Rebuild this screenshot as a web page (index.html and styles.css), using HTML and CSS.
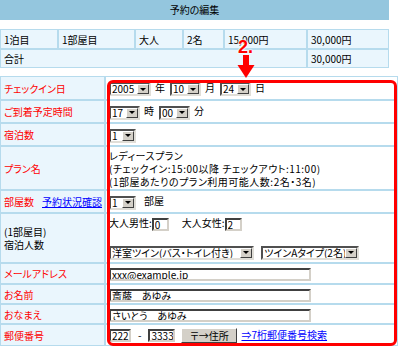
FILE: index.html
```html
<!DOCTYPE html>
<html lang="ja">
<head>
    <meta charset="UTF-8">
    <title>予約の編集</title>
    <link rel="stylesheet" href="styles.css">
</head>
<body>
<div class="page">
    <div class="title">予約の編集</div>

    <table class="summary">
        <colgroup>
            <col class="s1"><col class="s2"><col class="s3"><col class="s4"><col class="s5"><col class="s6">
        </colgroup>
        <tr>
            <td>1泊目</td><td>1部屋目</td><td>大人</td><td>2名</td><td>15,000円</td><td>30,000円</td>
        </tr>
        <tr>
            <td colspan="5">合計</td><td>30,000円</td>
        </tr>
    </table>

    <table class="form">
        <colgroup><col class="lab"><col></colgroup>
        <tr class="r1">
            <th>チェックイン日</th>
            <td>
                <span class="sel w-year"><select><option>2005</option></select><span class="drop"></span></span><span class="unit">年</span><span class="sel w-2"><select><option>10</option></select><span class="drop"></span></span><span class="unit">月</span><span class="sel w-2"><select><option>24</option></select><span class="drop"></span></span><span class="unit">日</span>
            </td>
        </tr>
        <tr class="r2">
            <th>ご到着予定時間</th>
            <td>
                <span class="sel w-2"><select><option>17</option></select><span class="drop"></span></span><span class="unit">時</span><span class="sel w-2"><select><option>00</option></select><span class="drop"></span></span><span class="unit">分</span>
            </td>
        </tr>
        <tr class="r3">
            <th>宿泊数</th>
            <td><span class="sel w-1"><select><option>1</option></select><span class="drop"></span></span></td>
        </tr>
        <tr class="r4">
            <th>プラン名</th>
            <td class="plan">
                レディースプラン<br>
                (チェックイン:15:00以降 チェックアウト:11:00)<br>
                (1部屋あたりのプラン利用可能人数:2名・3名)
            </td>
        </tr>
        <tr class="r5">
            <th>部屋数<a href="#" class="check">予約状況確認</a></th>
            <td><span class="sel w-1"><select><option>1</option></select><span class="drop"></span></span><span class="rooms">部屋</span></td>
        </tr>
        <tr class="r6">
            <th class="plain">(1部屋目)<br>宿泊人数</th>
            <td class="guests">
                <div>大人男性:<input class="txt w-num" type="text" value="0"><span class="female">大人女性:</span><input class="txt w-num" type="text" value="2"></div>
                <div class="types">
                    <span class="sel w-room"><select><option>洋室ツイン(バス・トイレ付き)</option></select><span class="drop"></span></span>
                    <span class="sel w-type"><select><option>ツインAタイプ(2名)</option></select><span class="drop"></span></span>
                </div>
            </td>
        </tr>
        <tr class="r7">
            <th>メールアドレス</th>
            <td><input class="txt w-wide" type="text" value="xxx@example.jp"></td>
        </tr>
        <tr class="r8">
            <th>お名前</th>
            <td><input class="txt w-wide" type="text" value="斎藤　あゆみ"></td>
        </tr>
        <tr class="r9">
            <th>おなまえ</th>
            <td><input class="txt w-wide" type="text" value="さいとう　あゆみ"></td>
        </tr>
        <tr class="r10">
            <th>郵便番号</th>
            <td>
                <input class="txt w-zip3" type="text" value="222"><span class="dash">-</span><input class="txt w-zip4" type="text" value="3333"><button class="btn">〒→住所</button><a href="#" class="zip">⇒7桁郵便番号検索</a>
            </td>
        </tr>
    </table>

    <!-- step marker drawn over the form -->
    <div class="frame"></div>
    <div class="step">2.</div>
    <svg class="arrow" width="20" height="24" viewBox="0 0 20 24">
        <rect x="6" y="0" width="6" height="11" fill="#ff0000"/>
        <polygon points="0.5,10 17.5,10 9,23" fill="#ff0000"/>
    </svg>
</div>
</body>
</html>
```

FILE: styles.css
```css
body {
    margin: 0;
    font-family: "Noto Sans CJK JP", sans-serif;
    font-size: 10px;
    font-feature-settings: "palt";
    color: #000;
    background: #fff;
}

.page {
    position: relative;
    width: 398px;
}

.title {
    width: 389px;
    height: 20px;
    line-height: 20px;
    background-color: #94c6de;
    text-align: center;
}

table {
    border-collapse: separate;
    border-spacing: 0;
    table-layout: fixed;
    font-size: 10px;
}

td, th {
    border: 1px solid #b6dbed;
    padding: 0 3px;
    vertical-align: middle;
    white-space: nowrap;
}

/* summary */
.summary {
    width: 389px;
    margin-top: 9px;
}

.summary td {
    background-color: #eaf6fd;
    height: 18px;
}

.summary tr + tr td {
    height: 17px;
}

.s1 { width: 58px; }
.s2 { width: 77px; }
.s3 { width: 48px; }
.s4 { width: 41px; }
.s5 { width: 83px; }
.s6 { width: 82px; }

/* form */
.form {
    width: 398px;
    margin-top: 8px;
}

.lab { width: 105px; }

.form th {
    background-color: #eaf6fd;
    color: #ff0000;
    font-weight: normal;
    text-align: left;
}

.form th.plain {
    color: #000;
    line-height: 13px;
}

.form td {
    background-color: #fff;
}

.r1 td, .r1 th { height: 22px; }
.r2 td, .r2 th { height: 21px; }
.r3 td, .r3 th { height: 21px; }
.r4 td, .r4 th { height: 42px; }
.r5 td, .r5 th { height: 21px; }
.r6 td, .r6 th { height: 48px; }
.r7 td, .r7 th { height: 19px; }
.r8 td, .r8 th { height: 18px; }
.r9 td, .r9 th { height: 18px; }
.r10 td, .r10 th { height: 20px; }

.plan {
    line-height: 13px;
    letter-spacing: 0.5px;
}

.guests {
    line-height: 13px;
}

.types {
    margin-top: 13px;
}

.check {
    margin-left: 8px;
    color: #0000ff;
}

.zip {
    margin-left: 4px;
    color: #0000ff;
}

.unit {
    margin: 0 5px 0 4px;
}

.rooms {
    margin-left: 8px;
}

.female {
    margin-left: 13px;
}

.dash {
    margin: 0 7px;
}

/* windows style select */
.sel {
    display: inline-flex;
    box-sizing: border-box;
    height: 14px;
    border: 2px solid;
    border-color: #505050 #e0ded8 #e0ded8 #505050;
    background: #fff;
    vertical-align: middle;
}

.sel select {
    -webkit-appearance: none;
    appearance: none;
    flex: 1;
    min-width: 0;
    border: 0;
    margin: 0;
    padding: 0 0 0 1px;
    font: inherit;
    line-height: 10px;
    height: 10px;
    background: transparent;
    color: #000;
    outline: none;
}

.drop {
    width: 12px;
    flex: none;
    box-sizing: border-box;
    background: #d4d0c8;
    border: 1px solid;
    border-color: #fff #404040 #404040 #fff;
    display: flex;
    align-items: center;
    justify-content: center;
}

.drop::after {
    content: "";
    border-left: 3px solid transparent;
    border-right: 3px solid transparent;
    border-top: 3px solid #000;
}

.sel + .sel {
    margin-left: 5px;
}

.w-year { width: 42px; }
.w-2 { width: 31px; }
.w-1 { width: 27px; }
.w-room { width: 145px; }
.w-type { width: 98px; }

/* text inputs */
.txt {
    box-sizing: border-box;
    height: 13px;
    border: 2px solid;
    border-color: #404040 #d4d0c8 #d4d0c8 #404040;
    padding: 0 0 0 1px;
    margin: 0;
    font: inherit;
    line-height: 9px;
    vertical-align: middle;
}

.w-num { width: 17px; }
.w-wide { width: 202px; }
.w-zip3 { width: 22px; }
.w-zip4 { width: 27px; }

.btn {
    box-sizing: border-box;
    height: 15px;
    width: 56px;
    margin-left: 6px;
    padding: 0;
    background: #d4d0c8;
    border: 1px solid;
    border-color: #fff #404040 #404040 #fff;
    font: inherit;
    line-height: 12px;
    vertical-align: middle;
}

/* overlay marker */
.frame {
    position: absolute;
    left: 107px;
    top: 80px;
    width: 290px;
    height: 266px;
    box-sizing: border-box;
    border: 3px solid #ff0000;
    border-radius: 6px;
    pointer-events: none;
}

.step {
    position: absolute;
    left: 238px;
    top: 38px;
    font-family: "Liberation Sans", Arial, sans-serif;
    font-size: 18px;
    font-weight: bold;
    line-height: 18px;
    color: #ff0000;
    text-shadow: 0 0 2px #fff, 0 0 2px #fff, 0 0 2px #fff;
}

.arrow {
    position: absolute;
    left: 237px;
    top: 55px;
}
```
